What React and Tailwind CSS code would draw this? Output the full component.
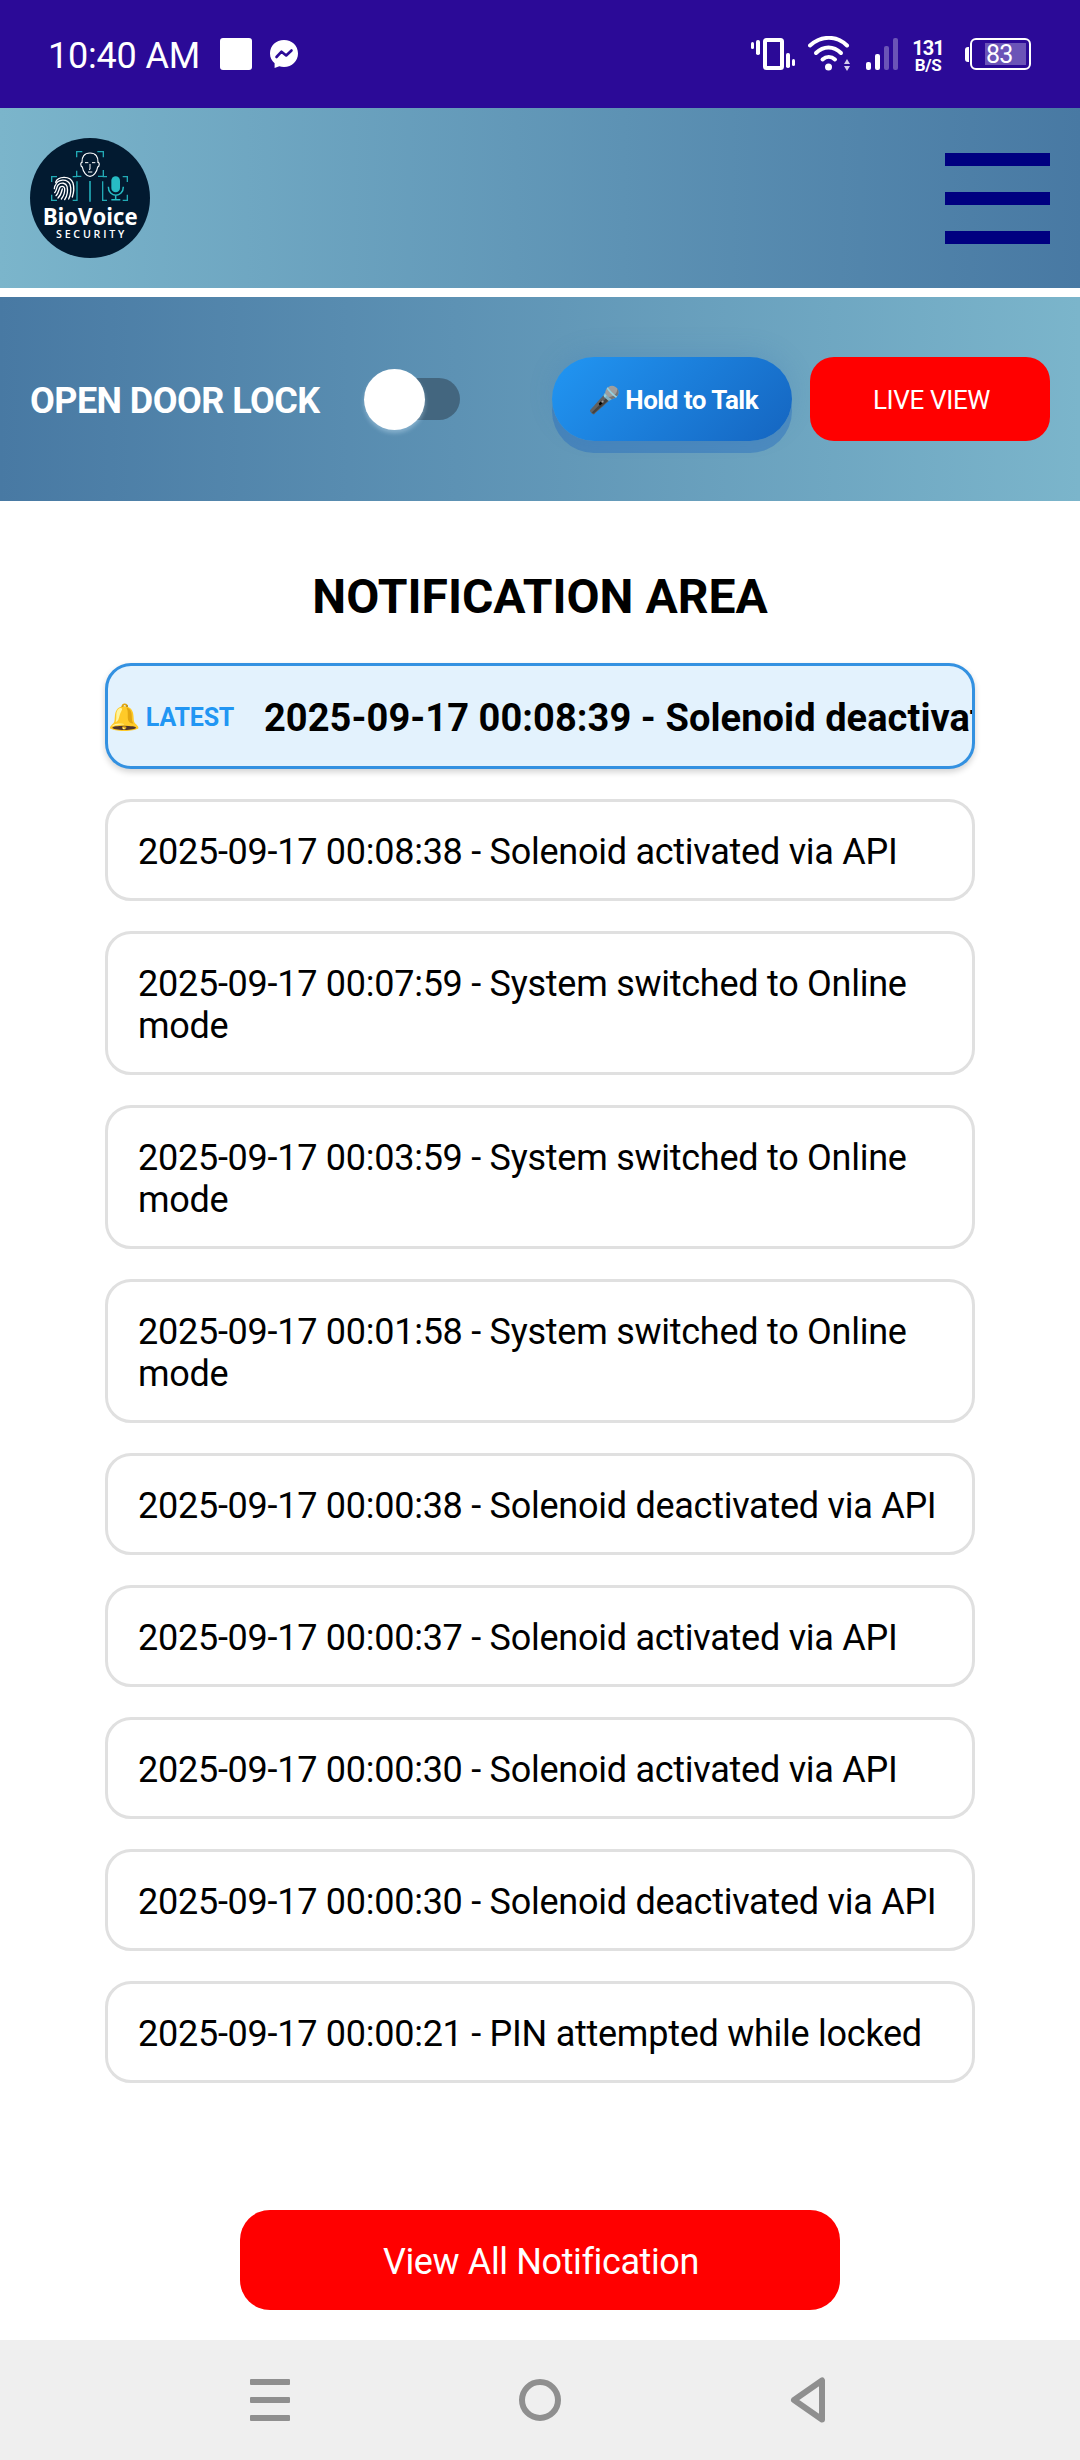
const notifications = [
  "2025-09-17 00:08:38 - Solenoid activated via API",
  "2025-09-17 00:07:59 - System switched to Online mode",
  "2025-09-17 00:03:59 - System switched to Online mode",
  "2025-09-17 00:01:58 - System switched to Online mode",
  "2025-09-17 00:00:38 - Solenoid deactivated via API",
  "2025-09-17 00:00:37 - Solenoid activated via API",
  "2025-09-17 00:00:30 - Solenoid activated via API",
  "2025-09-17 00:00:30 - Solenoid deactivated via API",
  "2025-09-17 00:00:21 - PIN attempted while locked",
];

function MessengerIcon() {
  return (
    <svg className="ml-[18px] h-[28px] w-[28px]" viewBox="0 0 28 28">
      <path fill="#fff" d="M14 0C6 0 0 5.8 0 13.4c0 4 1.8 7.4 4.600 9.800V28l4.700-1.700c1.500.4 3 .6 4.700.6 8 0 14-5.900 14-13.500S22 0 14 0z" />
      <path fill="none" stroke="#2b0a97" strokeWidth="2.600" strokeLinejoin="round" strokeLinecap="round" d="M6.500 17l5-5.300 4.700 3.800 5.300-5" />
    </svg>
  );
}

function VibrateIcon() {
  return (
    <svg className="h-[32px] w-[44px]" viewBox="0 0 44 32">
      <rect x="14" y="2" width="17" height="28" rx="1.500" fill="none" stroke="#fff" strokeWidth="4" />
      <g fill="#fff">
        <rect x="0" y="4" width="3" height="7" rx="1.500" />
        <rect x="5" y="2" width="4" height="15" rx="1.800" />
        <rect x="35" y="15" width="4" height="15" rx="1.800" />
        <rect x="41" y="21" width="3" height="7" rx="1.500" />
      </g>
    </svg>
  );
}

function WifiIcon() {
  return (
    <svg className="ml-[13px] h-[36px] w-[43px]" viewBox="0 0 43 36">
      <g fill="none" stroke="#fff" strokeWidth="4" strokeLinecap="round">
        <path d="M2 9.500C13.500-.7 28.500-.7 39 9.500" />
        <path d="M8 17C15.500 9.700 25.500 9.700 33 17" />
        <path d="M14.500 23.500c3.800-3.500 8.700-3.500 12.500 0" />
      </g>
      <circle cx="20.500" cy="31" r="3.500" fill="#fff" />
      <path fill="#d5cdec" d="M36 28l3-5 3 5zM36 30l3 5 3-5z" />
    </svg>
  );
}

function SignalIcon() {
  return (
    <svg className="ml-[15px] h-[32px] w-[32px]" viewBox="0 0 32 32">
      <rect x="0" y="24" width="5" height="8" rx="2" fill="#fff" />
      <rect x="9" y="16" width="5" height="16" rx="2" fill="#fff" />
      <rect x="18" y="8" width="5" height="24" rx="2" fill="#6b54b7" />
      <rect x="27" y="0" width="5" height="32" rx="2" fill="#6b54b7" />
    </svg>
  );
}

function Logo() {
  return (
    <svg className="h-[120px] w-[120px]" viewBox="90 114 360 360">
      <circle cx="270" cy="294" r="180" fill="#021a30" />
      <g fill="none" stroke="#22aab5" strokeWidth="4">
        <path d="M230 172v-17h17M292 155h18v17M230 212v17h14M294 229h16v-19" />
        <path d="M155 246v-16h16M155 284v17h16M218 230h13M231 244v57h-13" />
        <path d="M270 243v62" strokeWidth="5" />
        <path d="M321 230h-13M308 244v57h13M368 230h14v16M368 301h14v-17" />
      </g>
      <g fill="none" stroke="#fff" strokeWidth="3.500">
        <path d="M270 159c-17 0-25 11-24 28-5 0-5 12 1 14 2 15 13 28 23 28s21-13 23-28c6-2 6-14 1-14 1-17-7-28-24-28z" />
        <path d="M255 188h10M276 188h10M270 192v16h-3M264 216h13" strokeWidth="3" />
      </g>
      <g fill="none" stroke="#fff" strokeWidth="4" strokeLinecap="round">
        <path d="M167 247c6-18 43-22 52 2 4 14 2 30-2 42" />
        <path d="M163 266c0-8 1-9 4-12 6-16 34-20 43-1 4 12 3 32-4 44" />
        <path d="M164 278c7-7 5-18 11-24 9-8 23-5 26 5 3 12 0 29-7 40" />
        <path d="M168 287c9-9 8-19 12-25 5-5 13-3 14 4 1 11-3 22-10 31" />
        <path d="M174 294c9-9 11-18 13-27" />
      </g>
      <rect x="334" y="229" width="26" height="48" rx="13" fill="#27bcc4" />
      <path d="M325 260c0 34 45 34 45 0M347 286v12M334 299h27" fill="none" stroke="#27bcc4" strokeWidth="4.500" />
      <text x="128" y="375" textLength="285" lengthAdjust="spacingAndGlyphs" fill="#fff" fontSize="70" fontWeight="700" fontFamily="Open Sans, sans-serif">BioVoice</text>
      <text x="168" y="414" textLength="205" lengthAdjust="spacing" fill="#fff" fontSize="32" fontWeight="600" fontFamily="Open Sans, sans-serif">SECURITY</text>
    </svg>
  );
}

function StatusBar() {
  return (
    <div className="flex h-[108px] items-center bg-[#2b0a97] pl-[48px] pr-[49px] text-white">
      <span className="w-[152px] pt-[3px] text-[36px] leading-[42px] tracking-[-0.2px] whitespace-nowrap">10:40 AM</span>
      <span className="ml-[20px] h-[32px] w-[32px] rounded-[3px] bg-white" />
      <MessengerIcon />
      <div className="ml-auto flex items-center">
        <VibrateIcon />
        <WifiIcon />
        <SignalIcon />
        <div className="ml-[15px] flex w-[30px] flex-col items-center pt-[4px] font-bold">
          <span className="text-[20px] leading-[18px] tracking-[-1px]">131</span>
          <span className="text-[17px] leading-[16px] tracking-[-0.3px]">B/S</span>
        </div>
        <div className="ml-[22px] flex items-center">
          <span className="h-[15px] w-[4px] rounded-l-[3px] bg-white" />
          <div className="ml-px flex h-[32px] w-[61px] items-center justify-end rounded-[6px] border-2 border-white pr-[3px]">
            <span className="flex h-[22px] w-[41px] items-center bg-[#6b54b7] pl-px text-[25px] leading-none tracking-[-0.8px]">83</span>
          </div>
        </div>
      </div>
    </div>
  );
}

export default function App() {
  return (
    <div className="flex h-[2460px] w-[1080px] flex-col overflow-hidden bg-white font-['Roboto',sans-serif] text-black">
      <StatusBar />

      <header className="flex h-[180px] items-center justify-between bg-linear-to-r from-[#7bb5cb] to-[#4879a3] px-[30px]">
        <Logo />
        <button className="flex w-[105px] flex-col gap-[26px]">
          <span className="h-[13px] bg-[#000080]" />
          <span className="h-[13px] bg-[#000080]" />
          <span className="h-[13px] bg-[#000080]" />
        </button>
      </header>

      <section className="mt-[9px] flex h-[204px] items-center bg-linear-to-r from-[#4879a3] to-[#7bb5cb] px-[30px]">
        <span className="w-[334px] pt-[3px] text-[36px] leading-[42px] font-bold tracking-[-0.55px] whitespace-nowrap text-white">OPEN DOOR LOCK</span>
        <div className="flex h-[42px] w-[96px] items-center rounded-full bg-[#43667f]">
          <span className="h-[61px] w-[61px] shrink-0 rounded-full bg-white shadow-[0_3px_4px_rgba(190,220,240,0.45)]" />
        </div>
        <button className="ml-auto flex h-[84px] w-[240px] items-center justify-center rounded-full bg-linear-[135deg,#2196f3,#1565c0] pt-[2px] pl-[2px] text-[26px] font-bold tracking-[-0.5px] whitespace-nowrap text-white shadow-[0_12px_0_rgba(33,105,190,0.42),0_-6px_24px_rgba(60,120,180,0.2)]">
          🎤 Hold to Talk
        </button>
        <button className="ml-[18px] h-[84px] w-[240px] rounded-[24px] bg-[#ff0000] pt-[2px] pl-[3px] text-[26px] tracking-[-0.35px] text-white">LIVE VIEW</button>
      </section>

      <main className="flex flex-1 flex-col items-center">
        <h1 className="mt-[68px] text-[48px] leading-[56px] font-bold">NOTIFICATION AREA</h1>
        <div className="mt-[38px] flex w-[870px] flex-col gap-[30px]">
          <div className="flex h-[106px] items-center overflow-hidden rounded-[26px] border-[3px] border-[#3391e1] bg-[#e3f2fd] whitespace-nowrap shadow-[0_3px_6px_rgba(0,0,0,0.18)]">
            <span className="w-[156px] shrink-0 pt-[2px] text-[25px] font-bold tracking-[-0.2px] text-[#2196f3]">
              <span className="text-[26px]">🔔</span> LATEST
            </span>
            <span className="pt-[5px] text-[38px] font-bold tracking-[0.07px]">2025-09-17 00:08:39 - Solenoid deactivated via API</span>
          </div>
          {notifications.map((text, i) => (
            <div key={i} className="rounded-[26px] border-[3px] border-[#e0e0e0] pt-[29px] pr-[24px] pb-[25px] pl-[30px] text-[36px] leading-[42px] tracking-[-0.26px]">
              {text}
            </div>
          ))}
        </div>
        <button className="mt-auto mb-[30px] h-[100px] w-[600px] rounded-[30px] bg-[#ff0000] pt-[3px] pl-[2px] text-[36px] tracking-[-0.38px] text-white">View All Notification</button>
      </main>

      <nav className="flex h-[120px] items-center justify-between bg-[#efefef] pr-[255px] pl-[250px]">
        <div className="flex w-[40px] flex-col gap-[12px]">
          <span className="h-[6px] rounded-[1px] bg-[#8f8f8f]" />
          <span className="h-[6px] rounded-[1px] bg-[#8f8f8f]" />
          <span className="h-[6px] rounded-[1px] bg-[#8f8f8f]" />
        </div>
        <span className="h-[42px] w-[42px] rounded-full border-[6px] border-[#8f8f8f]" />
        <svg className="h-[46px] w-[35px]" viewBox="0 0 35 46">
          <path d="M32 3.500v39L4 23z" fill="none" stroke="#8f8f8f" strokeWidth="6" strokeLinejoin="round" />
        </svg>
      </nav>
    </div>
  );
}
